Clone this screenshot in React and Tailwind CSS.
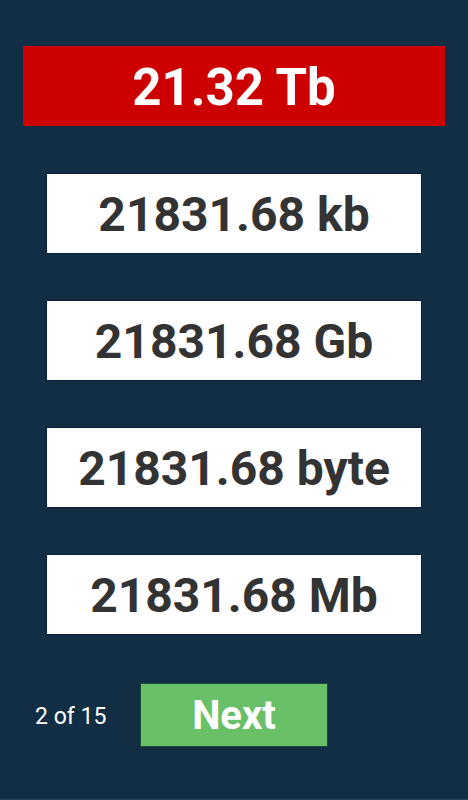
const options = ['21831.68 kb', '21831.68 Gb', '21831.68 byte', '21831.68 Mb']

export default function App() {
  return (
    <div className="h-[800px] w-[468px] bg-[#112e45] flex flex-col border-b border-[#2a4257]" style={{ fontFamily: 'Roboto, "Liberation Sans", sans-serif' }}>
      <div className="mt-[46px] ml-[23px] w-[422px] h-[80px] bg-[#cc0000] flex items-center justify-center">
        <span className="text-white font-bold text-[51px] leading-none pt-[2px]">21.32 Tb</span>
      </div>
      <div className="mt-[47px] ml-[46px] flex flex-col gap-[46px]">
        {options.map(o => (
          <div key={o} className="w-[376px] h-[81px] bg-white border border-[#0b1d38] flex items-center justify-center">
            <span className="text-[#333333] font-bold text-[48px] leading-none pt-[3px]">{o}</span>
          </div>
        ))}
      </div>
      <div className="mt-[48px] flex items-center">
        <span className="ml-[35px] w-[105px] text-white text-[23px] leading-none pt-[2px]">2 of 15</span>
        <button className="w-[188px] h-[64px] bg-[#6abf69] border border-[#1e4a3a] flex items-center justify-center text-white font-bold text-[40px] leading-none pt-[2px]">
          Next
        </button>
      </div>
    </div>
  )
}
